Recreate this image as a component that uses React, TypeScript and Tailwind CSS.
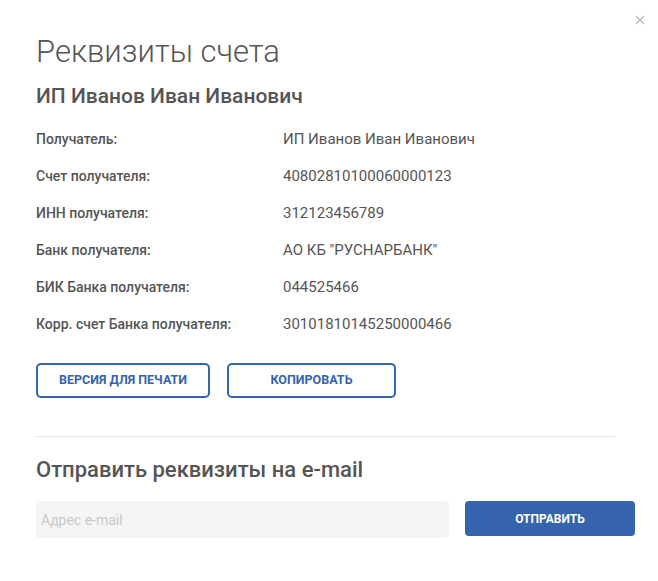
import React from "react";

const rows: [string, string][] = [
  ["Получатель:", "ИП Иванов Иван Иванович"],
  ["Счет получателя:", "40802810100060000123"],
  ["ИНН получателя:", "312123456789"],
  ["Банк получателя:", "АО КБ \"РУСНАРБАНК\""],
  ["БИК Банка получателя:", "044525466"],
  ["Корр. счет Банка получателя:", "30101810145250000466"],
];

export default function App() {
  return (
    <div
      className="relative w-[658px] h-[581px] bg-white text-[#555555]"
      style={{ fontFamily: "Roboto, 'Noto Sans', sans-serif" }}
    >
      <button className="absolute right-[12px] top-[14px] w-[12px] h-[12px] flex items-center justify-center">
        <svg width="10" height="10" viewBox="0 0 10 10">
          <path d="M1 1L9 9M9 1L1 9" stroke="#b3b8c8" strokeWidth="1.3" />
        </svg>
      </button>
      <div className="pl-[36px] pr-[23px] pt-[32px]">
        <h1 className="text-[31px] font-light leading-[40px] text-[#555555]">Реквизиты счета</h1>
        <h2 className="mt-[10px] text-[21px] font-medium leading-[28px] text-[#555555]">
          ИП Иванов Иван Иванович
        </h2>
        <div className="mt-[11px] flex flex-col">
          {rows.map(([l, v]) => (
            <div key={l} className="flex h-[37px] items-center">
              <div className="w-[247px] text-[14px] font-medium text-[#555555]">{l}</div>
              <div className="text-[15px] text-[#555555]">{v}</div>
            </div>
          ))}
        </div>
        <div className="mt-[20px] flex gap-[17px]">
          <button className="w-[174px] h-[35px] rounded-[5px] border-2 border-[#3563ad] text-[12.5px] font-bold text-[#3563ad] uppercase">
            Версия для печати
          </button>
          <button className="w-[169px] h-[35px] rounded-[5px] border-2 border-[#3563ad] text-[12.5px] font-bold text-[#3563ad] uppercase">
            Копировать
          </button>
        </div>
        <div className="mt-[38px] w-[579px] h-px bg-[#e6e6e6]" />
        <h3 className="mt-[19px] text-[22px] font-medium leading-[28px] text-[#555555]">
          Отправить реквизиты на e-mail
        </h3>
        <div className="mt-[17px] flex gap-[16px]">
          <input
            placeholder="Адрес e-mail"
            className="w-[413px] h-[37px] rounded-[4px] bg-[#f5f5f5] px-[5px] text-[14px] placeholder:text-[#c8c8c8] outline-none"
          />
          <button className="w-[170px] h-[35px] rounded-[4px] bg-[#3563ad] text-white text-[12px] font-bold uppercase">
            Отправить
          </button>
        </div>
      </div>
    </div>
  );
}
